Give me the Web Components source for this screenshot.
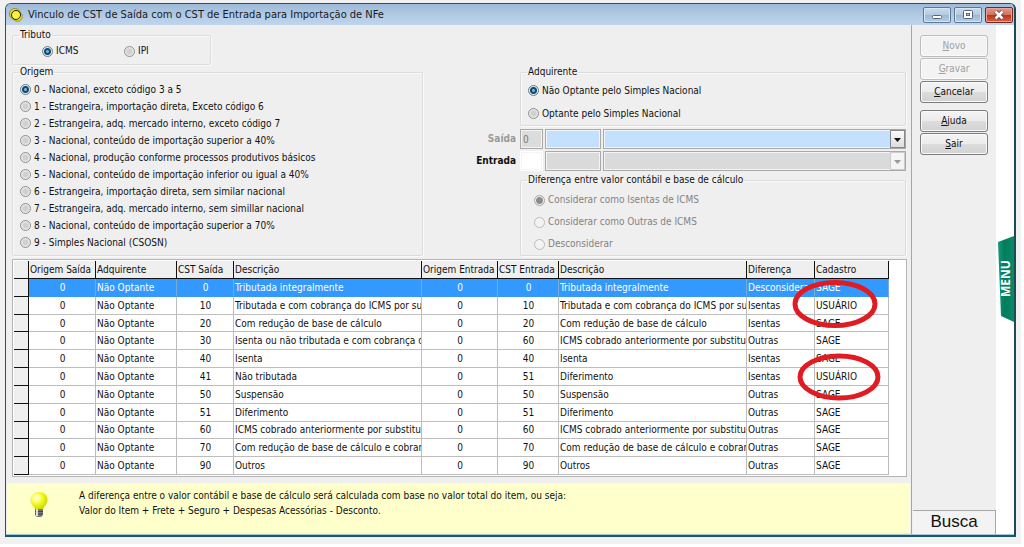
<!DOCTYPE html>
<html lang="pt-BR">
<head>
<meta charset="utf-8">
<title>Vinculo de CST de Saída com o CST de Entrada para Importação de NFe</title>
<style>
html { background: #fff; }
body { margin: 0 3px 3px 0; padding: 3px 5px 7px 5px; box-sizing: border-box; height: calc(100vh - 3px); min-height: 544px; display: flex; background: #f1f1f1; font: 10px/14px "DejaVu Sans Condensed", "DejaVu Sans", sans-serif; color: #111; }
app-window { flex: 1; min-width: 0; }
</style>
</head>
<body>
<app-window caption="Vinculo de CST de Saída com o CST de Entrada para Importação de NFe">
  <cst-form></cst-form>
  <side-bar slot="side"></side-bar>
</app-window>

<script>
const define = (name, html, setup) => {
  customElements.define(name, class extends HTMLElement {
    constructor() {
      super();
      this.attachShadow({ mode: 'open' }).innerHTML = html;
    }
    connectedCallback() {
      if (setup && !this.ready) { this.ready = true; setup(this, this.shadowRoot); }
    }
  });
};

/* Group box with a caption that breaks its top border */
define('group-box', `
<style>
:host { display: block; }
fieldset { box-sizing: border-box; height: 100%; min-width: 0; margin: 0; padding: 0; border: 1px solid #dcdcdc; box-shadow: inset 1px 1px #fafafa, 1px 1px #fafafa; border-radius: 2px; }
legend { margin-left: 6px; padding: 0 1px; height: 14px; line-height: 14px; }
</style>
<fieldset><legend></legend><slot></slot></fieldset>`, (el, root) => {
  root.querySelector('legend').textContent = el.getAttribute('caption');
});

/* Set of radio buttons; options are separated by "|" */
define('radio-set', `
<style>
:host { display: flex; flex-direction: column; }
:host([row]) { flex-direction: row; }
label { display: flex; align-items: center; gap: 3px; height: var(--row, 17px); white-space: nowrap; }
:host([row]) label { width: 82px; }
input { appearance: none; flex: none; box-sizing: border-box; width: 11px; height: 11px; margin: 0; border: 1px solid #8e8f8f; border-radius: 50%; background: radial-gradient(circle, #cfcfcf 0 2px, #f2f2f2 5px); }
input:checked { border-color: #6f7f8a; background: radial-gradient(circle at 50% 50%, #6db4d8 0 1px, #114a6e 2px 3px, #dfe6ea 4px); }
:host([disabled]) { color: #838383; }
:host([disabled]) input { border-color: #bcbcbc; background: #f3f3f3; }
:host([disabled]) input:checked { border-color: #a5a5a5; background: radial-gradient(circle, #8c8c8c 0 3px, #efefef 4px); }
</style>`, (el, root) => {
  el.getAttribute('options').split('|').forEach((text, i) => {
    const label = document.createElement('label');
    const input = document.createElement('input');
    input.type = 'radio';
    input.name = 'choice';
    input.checked = i === 0;
    input.disabled = el.hasAttribute('disabled');
    label.append(input, text);
    root.append(label);
  });
});

define('code-row', `
<style>
:host { display: grid; grid-template-columns: 61px 23px 56px 1fr; column-gap: 2px; align-items: center; height: 20px; }
label { font-weight: 700; text-align: right; padding-right: 2px; }
:host([off]) label { color: #9a9a9a; }
input, select { box-sizing: border-box; width: 100%; height: 20px; margin: 0; padding: 0 2px; font: inherit; border: 1px solid #a9a9a9; border-radius: 0; color: #777; background: var(--fill); box-shadow: inset 0 0 0 1px #f4f4f4; opacity: 1; outline: 0; }
.origin { background: var(--origin); }
:host(:not([off])) .origin { border-color: #fff; }
.combo { display: grid; grid-template-columns: 1fr 16px; }
select { appearance: none; grid-area: 1 / 1 / 2 / 3; }
svg { grid-area: 1 / 2; z-index: 1; align-self: center; box-sizing: border-box; width: 15px; height: 18px; border: 1px solid #888; background: linear-gradient(#fafafa, #dedede); color: #111; pointer-events: none; }
:host(:not([off])) svg { color: #999; border-color: #ccc; background: #f4f4f4; }
</style>
<label for="origin"></label>
<input id="origin" class="origin">
<input class="code" aria-label="CST">
<div class="combo"><select aria-label="Descrição do CST"><option></option></select>
<svg viewBox="0 0 13 16"><path d="M3 7h7L6.500 11z" fill="currentColor"/></svg></div>`, (el, root) => {
  root.querySelector('label').textContent = el.getAttribute('caption');
  root.querySelector('.origin').value = el.getAttribute('value') || '';
});

define('cst-form', `
<style>
:host { display: flex; flex-direction: column; flex: 1; min-width: 0; box-sizing: border-box; padding: 3px 0 0; }
.tributo { width: 199px; height: 37px; margin-left: 5px; --row: 18px; }
.tributo radio-set { padding-left: 29px; }
.top { display: grid; grid-template-columns: 411px minmax(385px, 449px); justify-content: space-between; margin: 0 5px 0 5px; height: 190px; }
.origem radio-set { padding: 2px 0 0 7px; }
.right { display: flex; flex-direction: column; }
.right group-box { margin-left: 63px; }
.adq { height: 61px; margin-bottom: 3px; --row: 23px; }
.adq radio-set { padding: 0 0 0 7px; }
code-row { margin-bottom: 2px; }
.dif { flex: 1; --row: 22px; }
.dif radio-set { padding: 2px 0 0 13px; }
data-grid { margin: 4px 4px 0 5px; }
hint-bar { flex: 1; margin: 6px 1px 1px 0; }
</style>
<group-box class="tributo" caption="Tributo"><radio-set row options="ICMS|IPI"></radio-set></group-box>
<div class="top">
  <group-box class="origem" caption="Origem"><radio-set options="0 - Nacional, exceto código 3 a 5|1 - Estrangeira, importação direta, Exceto código 6|2 - Estrangeira, adq. mercado interno, exceto código 7|3 - Nacional, conteúdo de importação superior a 40%|4 - Nacional, produção conforme processos produtivos básicos|5 - Nacional, conteúdo de importação inferior ou igual a 40%|6 - Estrangeira, importação direta, sem similar nacional|7 - Estrangeira, adq. mercado interno, sem simillar nacional|8 - Nacional, conteúdo de importação superior a 70%|9 - Simples Nacional (CSOSN)"></radio-set></group-box>
  <div class="right">
    <group-box class="adq" caption="Adquirente"><radio-set options="Não Optante pelo Simples Nacional|Optante pelo Simples Nacional"></radio-set></group-box>
    <code-row off caption="Saída" value="0" style="--fill:#c4e0ff;--origin:#dcdcdc"></code-row>
    <code-row caption="Entrada" style="--fill:#dadada;--origin:#fff"></code-row>
    <group-box class="dif" caption="Diferença entre valor contábil e base de cálculo"><radio-set disabled options="Considerar como Isentas de ICMS|Considerar como Outras de ICMS|Desconsiderar"></radio-set></group-box>
  </div>
</div>
<data-grid></data-grid>
<hint-bar>A diferença entre o valor contábil e base de cálculo será calculada com base no valor total do item, ou seja:<br>Valor do Item + Frete + Seguro + Despesas Acessórias - Desconto.</hint-bar>`);

define('data-grid', `
<style>
:host { display: block; position: relative; box-sizing: border-box; border: 1px solid #b4b4b4; background: #fff; padding: 1px 0 1px 1px; }
table { table-layout: fixed; border-collapse: separate; border-spacing: 0; width: 875px; height: 214px; }
th, td { box-sizing: border-box; padding: 1px 0 0 1px; font-weight: 400; text-align: left; line-height: 14px; white-space: nowrap; overflow: hidden; border-right: 1px solid #bdbdbd; border-bottom: 1px solid #bdbdbd; }
thead th { height: 18px; background: #efefef; border-color: #111; }
tbody th { background: #efefef; border-color: #111; }
.num { text-align: center; }
tr.selected td { background: #3399ff; color: #fff; border-right-color: #78a9d8; border-bottom-color: #3399ff; }
svg { position: absolute; width: 86px; height: 50px; fill: none; stroke: #e01b22; stroke-width: 5; }
.first { left: 779px; top: 19px; }
.second { left: 783px; top: 92px; }
</style>
<table>
<colgroup><col style="width:15px"><col style="width:67px"><col style="width:81px"><col style="width:57px"><col style="width:188px"><col style="width:76px"><col style="width:61px"><col style="width:188px"><col style="width:68px"><col style="width:74px"></colgroup>
<thead><tr><th></th></tr></thead><tbody></tbody></table>
<svg class="first" viewBox="0 0 86 50" aria-hidden="true"><ellipse cx="43" cy="25" rx="40" ry="21.500"/></svg>
<svg class="second" viewBox="0 0 86 50" aria-hidden="true"><ellipse cx="43" cy="25" rx="39" ry="21"/></svg>`, (el, root) => {
  const head = root.querySelector('thead tr');
  ['Origem Saída', 'Adquirente', 'CST Saída', 'Descrição', 'Origem Entrada', 'CST Entrada', 'Descrição', 'Diferença', 'Cadastro'].forEach(t => {
    const th = document.createElement('th'); th.scope = 'col'; th.textContent = t; head.append(th);
  });
  const trib = 'Tributada e com cobrança do ICMS por su';
  const red = 'Com redução de base de cálculo';
  const cob = 'ICMS cobrado anteriormente por substitui';
  const redCob = 'Com redução de base de cálculo e cobran';
  const rows = [
    ['0', 'Tributada integralmente', '0', 'Tributada integralmente', 'Desconsidera', 'SAGE'],
    ['10', trib, '10', trib, 'Isentas', 'USUÁRIO'],
    ['20', red, '20', red, 'Isentas', 'SAGE'],
    ['30', 'Isenta ou não tributada e com cobrança d', '60', cob, 'Outras', 'SAGE'],
    ['40', 'Isenta', '40', 'Isenta', 'Isentas', 'SAGE'],
    ['41', 'Não tributada', '51', 'Diferimento', 'Isentas', 'USUÁRIO'],
    ['50', 'Suspensão', '50', 'Suspensão', 'Outras', 'SAGE'],
    ['51', 'Diferimento', '51', 'Diferimento', 'Outras', 'SAGE'],
    ['60', cob, '60', cob, 'Outras', 'SAGE'],
    ['70', redCob, '70', redCob, 'Outras', 'SAGE'],
    ['90', 'Outros', '90', 'Outros', 'Outras', 'SAGE']
  ];
  const body = root.querySelector('tbody');
  rows.forEach(([cs, ds, ce, de, dif, cad], i) => {
    const tr = body.insertRow();
    if (i === 0) tr.className = 'selected';
    tr.append(document.createElement('th'));
    ['0', 'Não Optante', cs, ds, '0', ce, de, dif, cad].forEach((t, c) => {
      const td = tr.insertCell(); td.textContent = t;
      if ([0, 2, 4, 5].includes(c)) td.className = 'num';
    });
  });
});

define('hint-bar', `
<style>
:host { display: flex; align-items: flex-start; box-sizing: border-box; padding: 5px 0 0 22px; background: #ffffcb; line-height: 15px; }
svg { flex: none; width: 20px; height: 28px; margin: 3px 30px 0 0; }
</style>
<svg viewBox="0 0 20 28" aria-hidden="true"><defs><radialGradient id="g" cx=".35" cy=".35" r=".7"><stop offset="0" stop-color="#fff"/><stop offset=".3" stop-color="#ffff70"/><stop offset=".7" stop-color="#e6ee00"/><stop offset="1" stop-color="#c6cf20"/></radialGradient></defs>
<path d="M10 1C5 1 1.500 4.500 1.500 9c0 4 3 5.500 4.500 9h8c1.500-3.500 4.500-5 4.500-9C18.500 4.500 15 1 10 1z" fill="url(#g)"/><path d="M6 18h8v6l-2 2H8l-2-2z" fill="#777"/><path d="M6 20.500h8M6 23h8" stroke="#444"/><path d="M8 18v7" stroke="#ddd" stroke-width="2"/></svg>
<div><slot></slot></div>`);

/* Right-hand command column and the vertical menu tab */
define('side-bar', `
<style>
:host { display: flex; flex: none; width: 103px; }
.commands { display: flex; flex-direction: column; box-sizing: border-box; width: 85px; padding: 10px 8px 0 8px; gap: 1px; background: #efefef; border-left: 1px solid #a6a6a6; }
button { font: inherit; color: inherit; margin: 0; padding: 0; box-sizing: border-box; }
.commands button { height: 22px; border: 1px solid #7c7c7c; border-radius: 3px; background: linear-gradient(#f4f4f4, #ebebeb 50%, #dcdcdc 50%, #d2d2d2); box-shadow: inset 0 0 0 1px #fafafa; }
.commands button:disabled { color: #a0a0a0; border-color: #bdbdbd; background: #f3f3f3; }
.commands .gap { margin-top: 6px; }
.commands .busca { margin: auto -8px 0 -7px; height: 24px; padding-bottom: 2px; font: 17px/20px "Liberation Sans", sans-serif; background: #f3f3f3; border: 1px solid #a6a6a6; border-width: 1px 1px 0 0; border-radius: 0; box-shadow: none; }
.rail { flex: 1; display: flex; flex-direction: column; align-items: flex-end; background: #fff; }
.menu { margin-top: 211px; width: 16px; height: 86px; border: 0; background: linear-gradient(90deg, #159a7a, #007d5c 40%, #0a8a68); clip-path: polygon(0 6px, 100% 0, 100% 100%, 3px 80px); color: #fff; font: 700 12px/16px "Noto Sans", sans-serif; writing-mode: vertical-rl; }
.menu span { display: block; transform: rotate(180deg); }
</style>
<div class="commands">
  <button disabled><u>N</u>ovo</button><button disabled><u>G</u>ravar</button><button><u>C</u>ancelar</button>
  <button class="gap"><u>A</u>juda</button><button><u>S</u>air</button>
  <button class="busca">Busca</button>
</div>
<div class="rail"><button class="menu"><span>MENU</span></button></div>`);

define('app-window', `
<style>
:host { display: flex; flex-direction: column; box-sizing: border-box; border: 1px solid #3b4a55; border-right: 2px solid #1c4a56; border-bottom: 2px solid #1c5a66; border-radius: 6px 6px 0 0; overflow: hidden; background: #efefef; }
header { display: flex; align-items: center; height: 21px; padding: 0 1px 0 3px; background: linear-gradient(#9dbad9, #b4cce6 60%, #bfd5ec); color: #1a1a1a; }
h1 { flex: 1; margin: 0 0 0 5px; font: 400 11px/20px "DejaVu Sans Condensed", "DejaVu Sans", sans-serif; }
.icon { width: 14px; height: 14px; }
button { box-sizing: border-box; width: 28px; height: 16px; margin-left: 3px; padding: 0; border: 1px solid #5e7894; border-radius: 2px; background: linear-gradient(#c9daec, #b3cae2 50%, #9cb8d6 50%, #b5cde6); box-shadow: inset 0 0 0 1px #d9e6f3; display: grid; place-items: center; }
button svg { width: 14px; height: 12px; }
.close { border-color: #6b2a22; background: linear-gradient(#e09a8c, #d4705d 50%, #bb3118 50%, #d5624a); box-shadow: inset 0 0 0 1px #e8a89b; }
main { flex: 1; display: flex; min-height: 0; padding-left: 1px; border-bottom: 1px solid #a9c6d8; }
</style>
<header>
  <svg class="icon" viewBox="0 0 14 14" aria-hidden="true"><circle cx="6" cy="6" r="5.500" fill="#f3e21a" stroke="#8b7d00" stroke-width=".8"/><circle cx="8.500" cy="8.500" r="4.800" fill="#f3e21a" stroke="#8b7d00" stroke-width=".8"/><circle cx="7" cy="7" r="4.500" fill="#fbf23c" stroke="#222"/></svg>
  <h1></h1>
  <button aria-label="Minimizar"><svg viewBox="0 0 14 12"><rect x="2.500" y="6.500" width="9" height="3" rx="1" fill="#fff" stroke="#56657a"/></svg></button>
  <button aria-label="Maximizar"><svg viewBox="0 0 14 12"><rect x="2.500" y="1.500" width="9" height="8" rx="1" fill="#fff" stroke="#56657a"/><rect x="5.500" y="4.500" width="3" height="2" fill="#b5cde6" stroke="#56657a"/></svg></button>
  <button class="close" aria-label="Fechar"><svg viewBox="0 0 14 12"><path d="M3.500 2.500l7 7M10.500 2.500l-7 7" stroke="#5b3a3a" stroke-width="4"/><path d="M3.500 2.500l7 7M10.500 2.500l-7 7" stroke="#fff" stroke-width="2.500"/></svg></button>
</header>
<main><slot></slot><slot name="side"></slot></main>`, (el, root) => {
  root.querySelector('h1').textContent = el.getAttribute('caption');
});
</script>
</body>
</html>
